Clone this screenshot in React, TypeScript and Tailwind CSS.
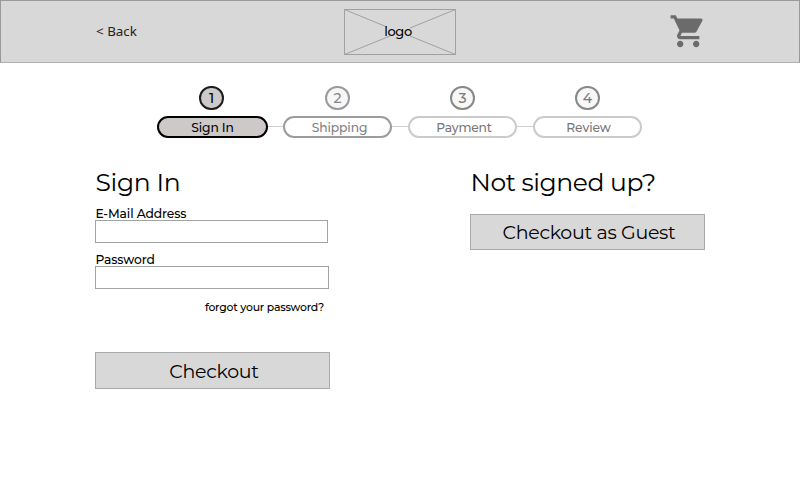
import { MdShoppingCart } from "react-icons/md";

const steps = [
  {
    n: "1",
    label: "Sign In",
    circle: "border-[#1c1c1c] bg-[#cdc9c9] text-black mr-[2px]",
    pill: "w-[111px] border-2 border-black bg-[#cdc9c9] text-black",
    text: "tracking-[-0.15px]",
  },
  {
    n: "2",
    label: "Shipping",
    circle: "border-[#9a9a9a] bg-[#f7f7f7] text-[#858585]",
    pill: "w-[109px] border-2 border-[#9c9c9c] text-[#808080]",
    text: "ml-[4px] tracking-[-0.1px]",
  },
  {
    n: "3",
    label: "Payment",
    circle: "border-[#888] bg-[#f7f7f7] text-[#7a7a7a]",
    pill: "w-[109px] border-2 border-[#cbcbcb] text-[#777]",
    text: "ml-[3px] tracking-[-0.2px]",
  },
  {
    n: "4",
    label: "Review",
    circle: "border-[#888] bg-[#f7f7f7] text-[#7a7a7a]",
    pill: "w-[109px] border-2 border-[#cbcbcb] text-[#777]",
    text: "ml-[2px] tracking-[-0.1px]",
  },
];

function Logo() {
  return (
    <div className="relative h-[46px] w-[112px]">
      <svg className="block h-full w-full" viewBox="0 0 112 46" fill="none" stroke="#a0a0a0">
        <rect x="0.5" y="0.5" width="111" height="45" />
        <path d="M0.5 0.5L43 18M66 19L111.5 0.5M0.5 45.5L46 27M66 27L111.5 45.5" />
      </svg>
      <span className="absolute inset-0 flex items-center justify-center pr-[3px] pb-[2px] text-[13px] leading-none font-medium tracking-[-0.35px]">
        logo
      </span>
    </div>
  );
}

function Field({ label, type, box }: { label: string; type: string; box: string }) {
  return (
    <label className="block">
      <span className="block h-[15px] whitespace-nowrap pl-[0.5px] text-[12.3px] leading-[18px] font-medium tracking-[-0.12px]">
        {label}
      </span>
      <input type={type} className={`block h-[23px] border border-[#a3a3a3] bg-white px-2 text-xs outline-none ${box}`} />
    </label>
  );
}

export default function App() {
  return (
    <div className="h-[501px] w-[800px] overflow-hidden bg-white font-['Montserrat','Inter',sans-serif] text-black">
      <header className="flex h-[63px] border border-t-[#999] border-r-[#999] border-l-[#999] border-b-[#b0b0b0] bg-[#d8d8d8]">
        <div className="w-[342px] pt-[18px] pl-[95px]">
          <a className="whitespace-nowrap font-['Noto_Sans',sans-serif] text-[13.4px] leading-[18px] text-[#222]">&lt; Back</a>
        </div>
        <div className="pt-2 pl-[0.5px]">
          <Logo />
        </div>
        <MdShoppingCart className="mt-[11px] ml-[213px] size-[38.4px] text-[#6b6b6b]" />
      </header>

      <nav className="flex pt-[23px] pl-[157px]">
        {steps.map((s, i) => (
          <div key={s.n} className="flex items-end">
            {i > 0 && (
              <div className={`mb-[11px] h-px bg-[#cfcfcf] ${i === 1 ? "w-[15px]" : "w-4"}`} />
            )}
            <div className="flex flex-col items-center">
              <div className={`flex h-[24px] w-[25px] items-center justify-center rounded-full border-2 text-[14px] leading-none font-medium ${s.circle}`}>
                {s.n}
              </div>
              <div className={`mt-[6px] flex h-[22px] items-center justify-center whitespace-nowrap rounded-full pt-[2px] text-[12.3px] leading-none font-medium ${s.pill}`}>
                <span className={s.text}>{s.label}</span>
              </div>
            </div>
          </div>
        ))}
      </nav>

      <main className="flex pt-[28px] pl-[95px]">
        <section className="w-[375px]">
          <h1 className="h-[39px] whitespace-nowrap pl-[0.5px] text-[25px] leading-8 tracking-[-0.35px]">Sign In</h1>
          <Field label="E-Mail Address" type="text" box="w-[233px]" />
          <div className="h-2" />
          <Field label="Password" type="password" box="w-[234px]" />
          <div className="w-[229px] pt-[9px] text-right">
            <a className="block whitespace-nowrap text-[10.9px] leading-[18px] font-medium tracking-[-0.22px]">forgot your password?</a>
          </div>
          <button className="mt-[36px] block h-[37px] w-[235px] border border-[#aaa] bg-[#d8d8d8] pt-px pl-[3px] text-[19px] leading-none tracking-[-0.3px]">
            Checkout
          </button>
        </section>
        <section>
          <h2 className="whitespace-nowrap pl-[0.5px] text-[25px] leading-8 tracking-[-0.43px]">Not signed up?</h2>
          <button className="mt-4 block h-[36px] w-[235px] whitespace-nowrap border border-[#aaa] bg-[#d8d8d8] pt-px pl-[3px] text-[19px] leading-none tracking-[-0.3px]">
            Checkout as Guest
          </button>
        </section>
      </main>
    </div>
  );
}
